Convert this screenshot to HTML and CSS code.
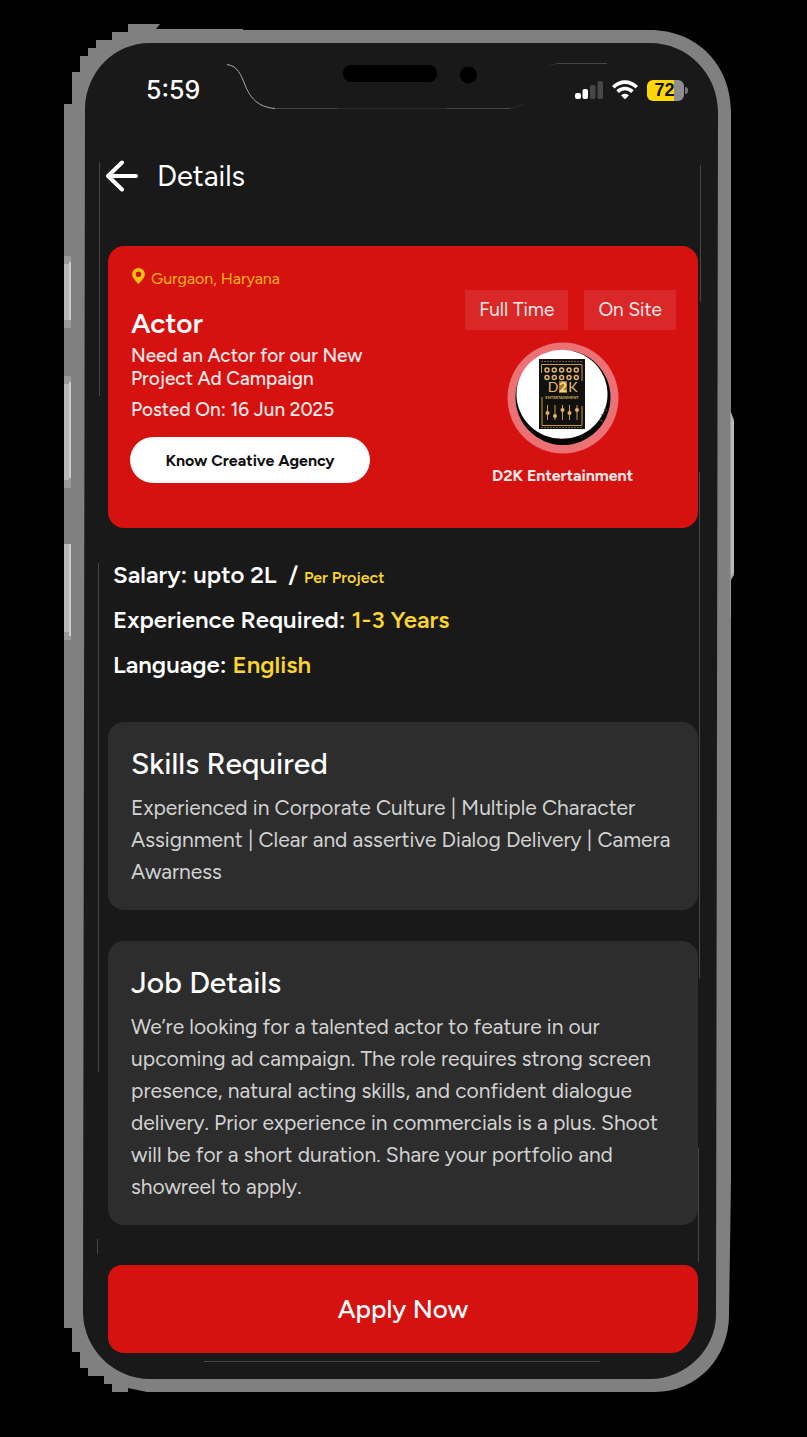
FILE: index.html
```html
<!DOCTYPE html>
<html lang="en">
<head>
<meta charset="utf-8">
<meta name="viewport" content="width=device-width, initial-scale=1">
<title>Details</title>
<link rel="stylesheet" href="styles.css">
</head>
<body>
<div class="phone">
  <svg class="phone-frame" viewBox="0 0 807 1437" preserveAspectRatio="none" aria-hidden="true">
    <path fill="#808080" d="M64 104H72V72H80V56H88V48H96V40H112V32H128V24H160L156 29H243V30H650C696 30 731 64 731 112V1180L729 1315C729 1358 697 1392 655 1392H147L128 1388V1392H112V1384H104V1376H88V1368H80V1352H72V1328H64Z"/>
    <path fill="#191919" d="M150 43H650C688 43 718 74 718 112L716 1315C716 1349 686 1379 650 1379H150C113 1379 83 1348 83 1312L85 108C86 72 114 43 150 43Z"/>
    <path fill="#9a9a9a" d="M64 256H71V328H64ZM64 376H71V488H64ZM64 544H71V640H64ZM731 412L734 420V575L731 580V618H730V412Z"/>
    <path fill="#b8b8b8" d="M64 264H69V320H64ZM64 384H69V480H64ZM64 544H69V632H64ZM731 414L734 422V572L731 577Z"/>
    <path fill="#cfcfcf" d="M69 262H71V320H69ZM69 382H71V478H69ZM69 544H71V636H69Z"/>
    <rect x="343" y="65" width="94" height="17" rx="8" fill="#000"/>
    <circle cx="468.500" cy="75" r="8.500" fill="#000"/>
    <g fill="none" stroke="#464646">
      <path stroke="#aaa" d="M227 64.500C238 66 241 75 245 85C250 97 257 107 275 108.500"/>
      <path d="M275 108.500H337M447 108.500H510M557 63.500H607"/>
      <path stroke="#2b2b2b" d="M337 108.500H447M510 108.500Q519 107 524 104M548 66L557 63.500"/>
      <path d="M99.500 162V396M98.500 563V1072M97.500 1239V1254M700.500 165V302M699.500 472V978M698.500 1148V1262M204 1361.500H600"/>
    </g>
  </svg>

  <div class="screen">
    <div class="status-bar">
      <time class="clock">5:59</time>
      <div class="indicators">
        <svg width="28" height="20" viewBox="0 0 28 20" role="img" aria-label="Signal, two bars">
          <rect x="0" y="13" width="6" height="6" rx="2" fill="#fff"/>
          <rect x="7.500" y="9" width="5.500" height="10" rx="2" fill="#fff"/>
          <rect x="15" y="5" width="5.500" height="14" rx="2" fill="#474747"/>
          <rect x="22.500" y="1" width="5.500" height="18" rx="2" fill="#474747"/>
        </svg>
        <svg width="26" height="20" viewBox="0 0 26 20" role="img" aria-label="Wi-Fi">
          <g fill="none" stroke="#fff" stroke-width="3.600">
            <path d="M1.300 7.200C8 .4 18 .4 24.700 7.200"/>
            <path d="M5.600 11.600C9.800 7.500 16.200 7.500 20.400 11.600"/>
          </g>
          <path fill="#fff" d="M9 15.300C11.400 13.200 14.600 13.200 17 15.300L13.700 18.700Q13 19.400 12.300 18.700Z"/>
        </svg>
        <div class="battery">72</div>
      </div>
    </div>

    <header class="top-bar">
      <button class="back" type="button" aria-label="Back">
        <svg width="32" height="32" viewBox="0 0 32 32" aria-hidden="true">
          <path d="M30 16H2M16 2.500L2 16L16 29.500" fill="none" stroke="#fff" stroke-width="4" stroke-linecap="round" stroke-linejoin="round"/>
        </svg>
      </button>
      <h1 class="page-title">Details</h1>
    </header>

    <main>
      <section class="hero">
        <div class="hero-info">
          <p class="location">
            <svg width="13" height="16" viewBox="0 0 13 16" aria-hidden="true"><path fill="#fdc513" fill-rule="evenodd" d="M6.500 0A6.300 6.300 0 0 0 .2 6.300C.2 10 4 13 5.600 15.300Q6.500 16.400 7.400 15.300C9 13 12.800 10 12.800 6.300A6.300 6.300 0 0 0 6.500 0ZM6.500 3.500A2.800 2.800 0 1 1 6.500 9.100A2.800 2.800 0 0 1 6.500 3.500Z"/></svg>
            Gurgaon, Haryana
          </p>
          <h2 class="role">Actor</h2>
          <p class="summary">Need an Actor for our New<br>Project Ad Campaign</p>
          <p class="posted">Posted On: 16 Jun 2025</p>
          <button class="agency-button" type="button">Know Creative Agency</button>
        </div>
        <div class="hero-side">
          <div class="tags"><span class="tag">Full Time</span><span class="tag">On Site</span></div>
          <div class="agency">
            <svg width="112" height="112" viewBox="0 0 112 112" role="img" aria-label="D2K Entertainment logo">
              <circle cx="56" cy="56" r="55.500" fill="#eb7175"/>
              <circle cx="56" cy="55.500" r="47.500" fill="#050505"/>
              <ellipse cx="55" cy="52.300" rx="45.500" ry="44.500" fill="#fff"/>
              <path d="M97 67l3 2M92 78l4 1M94 73l3-1" stroke="#555"/>
              <rect x="32" y="17" width="46" height="70" fill="#111"/>
              <g fill="none" stroke="#c99a3c">
                <path d="M34.500 31V22.500H75V39M75 64V83.500H35V55"/>
                <path d="M34 19.500H76M34 85.500H76" stroke="#776038" stroke-dasharray="2 1"/>
                <g stroke="#e0b267" stroke-width="1.500">
                  <circle cx="40" cy="28" r="2"/><circle cx="47.300" cy="28" r="2"/><circle cx="54.600" cy="28" r="2"/><circle cx="62" cy="28" r="2"/><circle cx="69.300" cy="28" r="2"/>
                  <circle cx="40" cy="35.500" r="2"/><circle cx="47.300" cy="35.500" r="2"/><circle cx="54.600" cy="35.500" r="2"/><circle cx="62" cy="35.500" r="2"/><circle cx="69.300" cy="35.500" r="2"/>
                </g>
                <path d="M40.500 63V78M48 63V78M55.500 63V78M62.500 63V78M70 63V78"/>
              </g>
              <g fill="#e0b267"><circle cx="40.500" cy="71" r="2"/><circle cx="48" cy="74" r="2"/><circle cx="55.500" cy="68" r="2"/><circle cx="62.500" cy="71" r="2"/><circle cx="70" cy="68" r="2"/></g>
              <path d="M52 39H60V51H52Z" fill="#a8771f"/>
              <text class="logo-name" x="46" y="50" text-anchor="middle">D</text>
              <text class="logo-name logo-two" x="56" y="50" text-anchor="middle">2</text>
              <text class="logo-name" x="66" y="50" text-anchor="middle">K</text>
              <text class="logo-sub" x="55" y="57" text-anchor="middle">ENTERTAINMENT</text>
            </svg>
            <p class="agency-name">D2K Entertainment</p>
          </div>
        </div>
      </section>

      <dl class="facts">
        <div class="fact"><dt>Salary:</dt><dd>upto 2L&nbsp; / <span class="accent unit">Per Project</span></dd></div>
        <div class="fact"><dt>Experience Required:</dt><dd class="accent">1-3 Years</dd></div>
        <div class="fact"><dt>Language:</dt><dd class="accent">English</dd></div>
      </dl>

      <section class="card">
        <h2 class="card-title">Skills Required</h2>
        <p class="card-text">Experienced in Corporate Culture | Multiple Character<br>Assignment | Clear and assertive Dialog Delivery | Camera<br>Awarness</p>
      </section>
      <section class="card">
        <h2 class="card-title">Job Details</h2>
        <p class="card-text">We’re looking for a talented actor to feature in our<br>upcoming ad campaign. The role requires strong screen<br>presence, natural acting skills, and confident dialogue<br>delivery. Prior experience in commercials is a plus. Shoot<br>will be for a short duration. Share your portfolio and<br>showreel to apply.</p>
      </section>
      <button class="apply" type="button">Apply Now</button>
    </main>
  </div>
</div>
</body>
</html>
```
FILE: styles.css
```css
* { box-sizing: border-box; }

body {
  margin: 0;
  background: #000;
  color: #fff;
  font-family: Figtree, Lato, "Liberation Sans", sans-serif;
}

h1, h2, p, dl, dd { margin: 0; font-weight: 400; }

button { border: 0; font: inherit; cursor: pointer; }

svg { display: block; flex: none; }

.phone { position: relative; }

.phone-frame {
  position: absolute;
  inset: 0;
  width: 100%;
  height: 100%;
}

.screen { position: relative; padding: 74px 109px 84px 108px; }

.status-bar {
  display: flex;
  align-items: center;
  justify-content: space-between;
  padding: 0 10px 0 38px;
  height: 32px;
}

.clock { font: 500 25px/32px Inter, "Liberation Sans", sans-serif; }

.indicators { display: flex; align-items: center; gap: 9px; }

.battery {
  position: relative;
  width: 37px;
  height: 21px;
  margin-right: 4px;
  padding-right: 2px;
  border-radius: 6px;
  background: linear-gradient(90deg, #fdd60a 73%, #8e8e8e 73%);
  color: #111;
  font: 700 18px/21px "Liberation Sans", sans-serif;
  text-align: center;
}

.battery::after {
  content: "";
  position: absolute;
  top: 7px;
  right: -4px;
  width: 3px;
  height: 7px;
  border-radius: 0 3px 3px 0;
  background: #777;
}

.top-bar {
  display: flex;
  align-items: center;
  gap: 19px;
  height: 40px;
  margin: 50px 0;
}

.back { padding: 0; margin-left: -2px; background: none; }

.page-title { font-size: 29px; line-height: 40px; }

.hero {
  display: flex;
  justify-content: space-between;
  min-height: 282px;
  padding: 22px;
  border-radius: 16px;
  background: #d61210;
}

.location {
  display: flex;
  gap: 6px;
  padding-left: 2px;
  color: #fdb51b;
  font-size: 16px;
  line-height: 22px;
}

.role { margin-top: 14px; font-size: 28px; line-height: 38px; font-weight: 600; }

.summary { margin-top: 2px; font-size: 19px; line-height: 23px; font-weight: 500; color: #ffe9e8; }

.posted { margin-top: 8px; font-size: 19px; line-height: 24px; font-weight: 500; color: #ffe9e8; }

.role, .summary, .posted { padding-left: 1px; }

.agency-button {
  width: 240px;
  height: 46px;
  margin-top: 15px;
  padding: 0;
  border-radius: 23px;
  background: #fff;
  color: #111;
  font-size: 16px;
  font-weight: 700;
}

.hero-side { padding-top: 22px; }

.tags { display: flex; gap: 16px; }

.tag {
  padding: 0 14px;
  background: #da2727;
  color: #ffe9e8;
  font-size: 19px;
  line-height: 40px;
}

.agency {
  display: flex;
  flex-direction: column;
  align-items: center;
  margin-top: 12px;
  padding-right: 16px;
}

.agency-name { margin-top: 10px; font-size: 16px; line-height: 24px; font-weight: 700; color: #ffe9e8; }

.logo-name { font: 14px Lato, sans-serif; fill: #e2bd6e; }
.logo-two { font-weight: 900; fill: #f5d98a; }
.logo-sub { font: 700 4px Lato, sans-serif; fill: #d8ac55; }

.facts { padding: 24px 5px 0; }

.fact {
  display: flex;
  align-items: baseline;
  gap: 6px;
  font-size: 24px;
  line-height: 45px;
}

.fact dt, .fact dd { font-weight: 600; }

.accent { color: #fbd42e; }

.unit { font-size: 16px; line-height: 16px; }

.card {
  margin-top: 31px;
  padding: 22px 22px 22px 23px;
  border-radius: 16px;
  background: #2d2d2d;
}

.facts + .card { margin-top: 35px; }

.card-title { font-size: 30px; line-height: 40px; font-weight: 500; }

.card-text { margin-top: 8px; font-size: 21px; line-height: 32px; color: #d2d2d2; }

.apply {
  display: block;
  width: 100%;
  height: 88px;
  margin-top: 40px;
  border-radius: 14px 14px 26px 16px / 14px 14px 44px 16px;
  background: #d61210;
  color: #fff;
  font-size: 26px;
  font-weight: 500;
}
```
